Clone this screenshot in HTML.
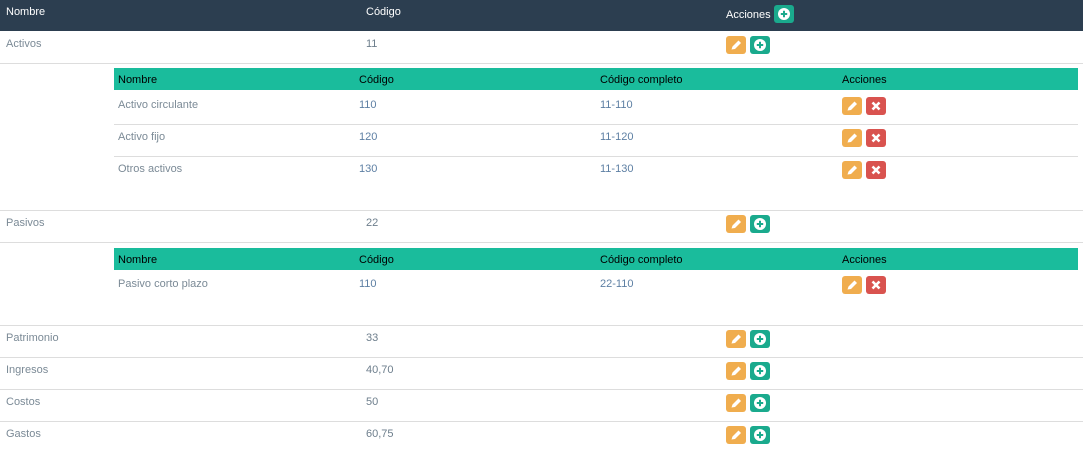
<!DOCTYPE html><html><head><meta charset="utf-8"><style>
body{margin:0;width:1083px;height:451px;background:#fff;font-family:"Liberation Sans",sans-serif;font-size:11px;position:relative;overflow:hidden}
.a{position:absolute;white-space:nowrap}
.hd{position:absolute;left:0;top:0;width:1083px;height:31px;background:#2c3e50}
.sh{position:absolute;left:114px;width:964px;height:22px;background:#1abc9c}
.ln{position:absolute;height:1px;background:#ddd}
.n{color:#7b8a96}.c{color:#6d7e8c}.b{color:#5d7fa3}
.btn{position:absolute;width:20px;height:18px;border-radius:3px}
.e{background:#f0ad4e}.p{background:#1aaa8d}.x{background:#d9534f}
.btn svg{position:absolute;left:0;top:0}
</style></head><body>
<div class="hd"></div>
<div class="a" style="left:6px;top:6px;color:#fff">Nombre</div>
<div class="a" style="left:366px;top:6px;color:#fff">Código</div>
<div class="a" style="left:726px;top:9px;color:#fff">Acciones</div>
<div id="root"></div>
<script>
var h='';
function E(x,y){return '<div class="btn e" style="left:'+x+'px;top:'+y+'px"><svg width="20" height="18"><path d="M5.5 13.5 L6.5 10.5 L12.5 4.5 L15 7 L9 13 Z" fill="#fff"/></svg></div>';}
function P(x,y){return '<div class="btn p" style="left:'+x+'px;top:'+y+'px"><svg width="20" height="18"><circle cx="10" cy="9" r="6" fill="#fff"/><path d="M10 5.8v6.4M6.8 9h6.4" stroke="#1aaa8d" stroke-width="2"/></svg></div>';}
function X(x,y){return '<div class="btn x" style="left:'+x+'px;top:'+y+'px"><svg width="20" height="18"><path d="M6.5 5.5l7 7M13.5 5.5l-7 7" stroke="#fff" stroke-width="2.6"/></svg></div>';}
h+=P(774,5);
function main(name,code,y){h+='<div class="a n" style="left:6px;top:'+(y-5)+'px">'+name+'</div><div class="a c" style="left:366px;top:'+(y-5)+'px">'+code+'</div>'+E(726,y-7)+P(750,y-7);}
function ln(y,l,w){h+='<div class="ln" style="top:'+y+'px;left:'+(l||0)+'px;width:'+(w||1083)+'px"></div>';}
function sub(y){h+='<div class="sh" style="top:'+y+'px"></div>';[['Nombre',118],['Código',359],['Código completo',600],['Acciones',842]].forEach(function(c){h+='<div class="a" style="left:'+c[1]+'px;top:'+(y+6)+'px;color:#000">'+c[0]+'</div>';});}
function srow(n,c,cc,y){h+='<div class="a n" style="left:118px;top:'+(y-5)+'px">'+n+'</div><div class="a b" style="left:359px;top:'+(y-5)+'px">'+c+'</div><div class="a b" style="left:600px;top:'+(y-5)+'px">'+cc+'</div>'+E(842,y-7)+X(866,y-7);}
main('Activos','11',43);ln(63);
sub(68);srow('Activo circulante','110','11-110',104);ln(124,114,964);srow('Activo fijo','120','11-120',136);ln(156,114,964);srow('Otros activos','130','11-130',168);
ln(210);main('Pasivos','22',222);ln(242);
sub(248);srow('Pasivo corto plazo','110','22-110',283);
ln(325);main('Patrimonio','33',337);ln(357);main('Ingresos','40,70',369);ln(389);main('Costos','50',401);ln(421);main('Gastos','60,75',433);
document.getElementById('root').innerHTML=h;
</script>
</body></html>
